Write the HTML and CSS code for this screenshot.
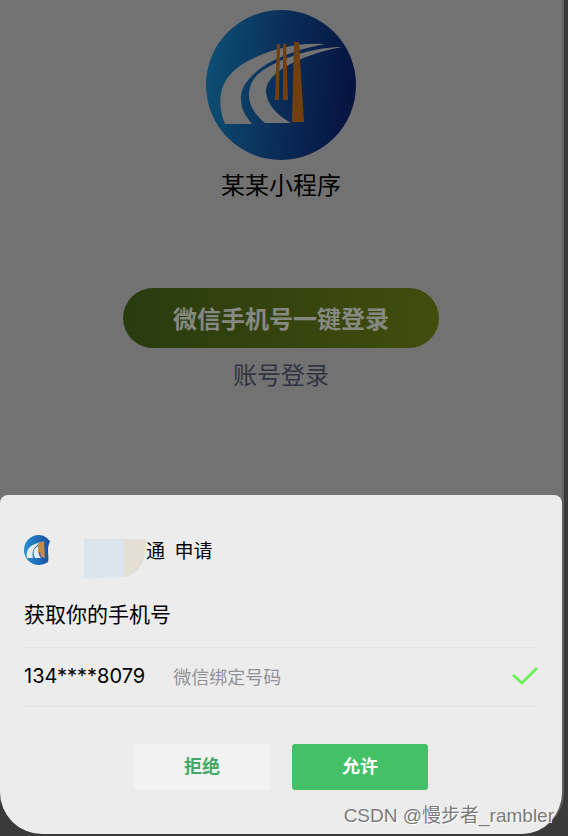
FILE: index.html
```html
<!DOCTYPE html>
<html lang="zh-CN">
<head>
<meta charset="utf-8">
<meta name="viewport" content="width=device-width, initial-scale=1">
<title>某某小程序</title>
<link rel="stylesheet" href="styles.css">
</head>
<body>
<div class="phone">
  <main class="login">
    <svg class="logo" viewBox="0 0 150 150" aria-hidden="true">
      <defs>
        <linearGradient id="disc" x1="0" x2="1" y1="0.45" y2="0.55">
          <stop offset="0" stop-color="#0d4e74"/>
          <stop offset="0.5" stop-color="#0a2d58"/>
          <stop offset="1" stop-color="#061240"/>
        </linearGradient>
      </defs>
      <circle cx="75" cy="75" r="75" fill="url(#disc)"/>
      <path fill="#727272" d="M19 114C14 103 13 90 16 79C20 66 31 56 44 50C64 39 92 32 119 34C109 36 101 38 94 40C82 44 64 50 50 62C40 71 34 80 35 90C35 99 40 107 46 114Z"/>
      <path fill="#727272" d="M59 113C48 104 42 94 43 83C44 72 50 63 64 56C82 46 110 37 136 37C124 39 106 44 93 50C77 57 60 67 60 82C61 96 73 106 85 113Z"/>
      <path fill="#723f10" d="M71 34H74L73 90H69ZM77 34H80L82 90H77ZM88 32H93L98 112H86Z"/>
    </svg>
    <h1 class="app-name">某某小程序</h1>
    <button class="quick-login" type="button">微信手机号一键登录</button>
    <a class="account-login" href="#account">账号登录</a>
  </main>

  <section class="sheet" role="dialog" aria-labelledby="sheet-title">
    <div class="requester">
      <svg class="avatar" viewBox="0 0 26 30" aria-hidden="true">
        <defs>
          <linearGradient id="badge" x1="0" x2="1">
            <stop offset="0" stop-color="#2790d0"/>
            <stop offset="1" stop-color="#174fa4"/>
          </linearGradient>
        </defs>
        <path fill="url(#badge)" d="M15 0C20 0 23 3 26 6C25 9 24 11 24 15C24 20 25 23 24 27C21 29 18 30 15 30C6 30 0 23 0 15S6 0 15 0Z"/>
        <path fill="#e6edf2" d="M3 23C1 13 8 9 18 7C11 11 7 15 9 23ZM11 23C7 15 12 11 19 9C14 14 13 18 17 23Z"/>
        <path fill="#c58b4b" d="M14 8L20 6L21 23L17 22L16 17L14 18Z"/>
      </svg>
      <svg class="smudge" viewBox="0 0 62 40" aria-hidden="true">
        <path fill="#dce4ec" d="M0 0H40V38L0 40Z"/>
        <path fill="#e4dfd5" d="M40 0H62C62 22 56 36 40 38Z"/>
      </svg>
      <span class="requester-text">通&ensp;申请</span>
    </div>
    <h2 class="sheet-title" id="sheet-title">获取你的手机号</h2>
    <label class="number-row">
      <input class="number-input" type="radio" name="number" checked>
      <span class="number">134****8079</span>
      <span class="number-note">微信绑定号码</span>
      <svg class="check" viewBox="0 0 26 20" aria-hidden="true">
        <path d="M1 9L10 17L25 2" fill="none" stroke="#66f052" stroke-width="2.6"/>
      </svg>
    </label>
    <div class="actions">
      <button class="action reject" type="button">拒绝</button>
      <button class="action allow" type="button">允许</button>
    </div>
  </section>
</div>
<div class="watermark">CSDN @慢步者_rambler</div>
</body>
</html>
```
FILE: styles.css
```css
* {
  box-sizing: border-box;
}

body {
  position: relative;
  min-height: 100vh;
  margin: 0;
  padding: 0 4px 2px 0;
  background: #3a3a3a;
  color: #000;
  font-family: "Noto Sans CJK SC", sans-serif;
}

.phone {
  display: flex;
  flex-direction: column;
  min-height: calc(100vh - 2px);
  border-right: 2px solid #606060;
  border-radius: 0 0 42px 42px;
  background: #727272;
  overflow: hidden;
}

.login {
  display: flex;
  flex: 1;
  flex-direction: column;
  align-items: center;
  padding: 10px 24px 24px;
}

.logo {
  width: 150px;
  height: 150px;
}

.app-name {
  margin: 8px 0 0;
  font-size: 24px;
  font-weight: 400;
  line-height: 32px;
}

.quick-login {
  width: 316px;
  max-width: 100%;
  height: 60px;
  margin-top: 88px;
  padding: 0;
  border: 0;
  border-radius: 30px;
  background: linear-gradient(90deg, #293b0f, #414d0d);
  color: #858981;
  font: 700 24px/32px "Noto Sans CJK SC", sans-serif;
}

.account-login {
  margin-top: 10px;
  color: #303442;
  font-size: 24px;
  line-height: 32px;
  text-decoration: none;
}

.sheet {
  padding: 32px 24px 44px;
  border-radius: 8px 8px 0 0;
  background: #ececec;
}

.requester {
  display: flex;
  align-items: center;
  height: 46px;
}

.avatar {
  width: 26px;
  height: 30px;
}

.smudge {
  width: 62px;
  height: 40px;
  margin: 18px 0 0 34px;
  align-self: flex-start;
  margin-top: 12px;
}

.requester-text {
  font-size: 19px;
  line-height: 28px;
}

.sheet-title {
  margin: 24px 0 18px;
  font-size: 21px;
  font-weight: 400;
  line-height: 32px;
}

.number-row {
  position: relative;
  display: flex;
  align-items: center;
  height: 60px;
  padding-bottom: 2px;
  border: solid #e4e4e4;
  border-width: 1px 0;
}

.number-input {
  position: absolute;
  margin: 0;
  opacity: 0;
}

.number {
  font-family: Inter, "Noto Sans CJK SC", sans-serif;
  font-size: 20px;
}

.number-note {
  margin-left: 28px;
  color: #929298;
  font-size: 18px;
}

.check {
  width: 26px;
  height: 20px;
  margin-left: auto;
}

.actions {
  display: flex;
  justify-content: center;
  gap: 22px;
  margin-top: 37px;
}

.action {
  width: 136px;
  height: 46px;
  padding: 0 0 4px;
  border: 0;
  border-radius: 3px;
  font: 700 18px/28px "Noto Sans CJK SC", sans-serif;
}

.reject {
  background: #f2f2f2;
  color: #43a865;
}

.allow {
  background: #44c066;
  color: #fff;
}

.watermark {
  position: absolute;
  right: 14px;
  bottom: 6px;
  color: #7a7a7a;
  font-family: "Liberation Sans", "Noto Sans CJK SC", sans-serif;
  font-size: 19px;
  line-height: 28px;
  text-shadow: 1px 1px 0 #fff;
}
```
